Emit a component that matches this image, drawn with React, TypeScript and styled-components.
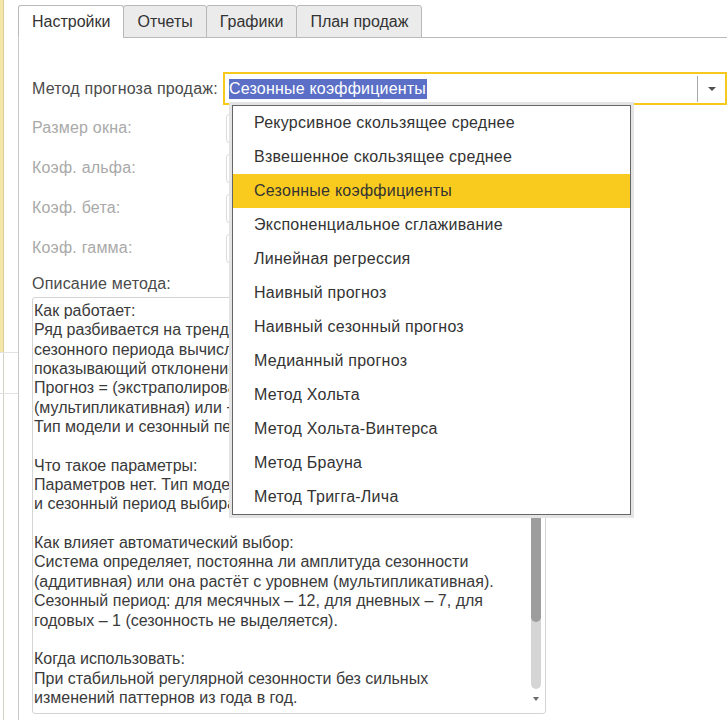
import React from "react";
import styled, { createGlobalStyle } from "styled-components";

const GlobalStyle = createGlobalStyle`
  body {
    margin: 0;
    background: #fff;
    font-family: "Liberation Sans", Arial, sans-serif;
    font-size: 16px;
    color: #333;
  }
`;

const Page = styled.div`
  display: flex;
  width: 727px;
  height: 720px;
  overflow: hidden;
`;

// strip of the neighbouring window visible on the left
const SideEdge = styled.div`
  width: 18px;
  flex: none;
  display: flex;
  flex-direction: column;
`;

const EdgeTop = styled.div`
  height: 352px;
  background: linear-gradient(to right, #f4e7a8 0 3px, #d9cf98 3px 4px, transparent 4px);
`;

const EdgeRow = styled.div<{ $h: number }>`
  height: ${(p) => p.$h}px;
  border-top: 1px solid #e2e2e2;
  background: linear-gradient(to right, transparent 0 3px, #d2d2c0 3px 4px, transparent 4px);
`;

const EdgeRest = styled.div`
  flex: 1;
  background: linear-gradient(to right, transparent 0 3px, #d2d2c0 3px 4px, transparent 4px);
`;

const Main = styled.div`
  flex: 1;
  display: flex;
  flex-direction: column;
  min-width: 0;
`;

const TabBar = styled.div`
  display: flex;
  align-items: flex-end;
  height: 38px;
  box-sizing: border-box;
  padding-top: 5px;
  border-bottom: 1px solid #b9b9b9;
`;

const Tab = styled.div<{ $active?: boolean }>`
  box-sizing: border-box;
  height: 33px;
  margin-bottom: -1px;
  padding: 0 13px;
  display: flex;
  align-items: center;
  border: 1px solid #b9b9b9;
  border-bottom-color: ${(p) => (p.$active ? "#fff" : "#b9b9b9")};
  border-radius: 3px 3px 0 0;
  background: ${(p) => (p.$active ? "#fff" : "#ebebeb")};
  color: #333;
  white-space: nowrap;

  & + & {
    margin-left: -1px;
  }
`;

const Panel = styled.div`
  flex: 1;
  border-left: 1px solid #c9c9c9;
  padding-left: 13px;
  display: flex;
  flex-direction: column;
`;

const MethodRow = styled.div`
  position: relative;
  margin-top: 34px;
  display: flex;
  align-items: center;
  height: 33px;
`;

const FieldLabel = styled.div<{ $width: number; $muted?: boolean }>`
  width: ${(p) => p.$width}px;
  flex: none;
  color: ${(p) => (p.$muted ? "#a9a9a9" : "#4a4a4a")};
  letter-spacing: 0.2px;
  white-space: nowrap;
`;

const SelectBox = styled.div`
  flex: 1;
  height: 33px;
  box-sizing: border-box;
  border: 2px solid #f8c91d;
  display: flex;
  align-items: center;
  padding-left: 4px;
`;

const SelectValue = styled.div`
  flex: 1;
  display: flex;
`;

const Highlight = styled.span`
  background: #5b6fc7;
  color: #fff;
  line-height: 20px;
  letter-spacing: 0.2px;
  padding: 0 1px 0 0;
`;

const ArrowButton = styled.div`
  width: 28px;
  height: 26px;
  box-sizing: border-box;
  border-left: 1px solid #a8a8a8;
  display: flex;
  align-items: center;
  justify-content: center;
`;

const Caret = styled.div`
  width: 0;
  height: 0;
  border-left: 4px solid transparent;
  border-right: 4px solid transparent;
  border-top: 4px solid #505050;
  margin-left: 1px;
`;

const DropList = styled.div`
  position: absolute;
  left: 200px;
  top: 33px;
  width: 399px;
  box-sizing: border-box;
  border: 1px solid #666;
  background: #fff;
  box-shadow: 0 0 0 3px #e4e4e4;
  z-index: 10;
`;

const DropItem = styled.div<{ $selected?: boolean }>`
  height: 34px;
  display: flex;
  align-items: center;
  padding-left: 21px;
  color: #333;
  letter-spacing: 0.25px;
  background: ${(p) => (p.$selected ? "#f9cb1e" : "transparent")};
  white-space: nowrap;
`;

const ParamList = styled.div`
  margin-top: 3px;
  display: flex;
  flex-direction: column;
`;

const ParamRow = styled.div`
  height: 40px;
  display: flex;
  align-items: center;
`;

const ParamBox = styled.div`
  width: 140px;
  height: 29px;
  box-sizing: border-box;
  border: 1px solid #dcdcdc;
  border-radius: 3px;
`;

const SectionLabel = styled.div`
  margin-top: 6px;
  line-height: 20px;
  color: #4a4a4a;
  letter-spacing: 0.2px;
`;

const TextBox = styled.div`
  margin-top: 3px;
  width: 514px;
  height: 417px;
  box-sizing: border-box;
  border: 1px solid #d4d4d4;
  border-radius: 3px;
  display: flex;
  overflow: hidden;
`;

const TextBody = styled.div`
  flex: 1;
  min-width: 0;
  padding: 3px 0 0 1px;
  overflow: hidden;
  color: #3a3a3a;
`;

const TextLine = styled.div`
  height: 19.35px;
  line-height: 19.35px;
  white-space: pre;
`;

const ScrollColumn = styled.div`
  width: 10px;
  flex: none;
  margin-right: 4px;
  padding: 6px 0 4px;
  display: flex;
  flex-direction: column;
  align-items: center;
`;

const ScrollTrack = styled.div`
  width: 10px;
  flex: 1;
  margin-top: 10px;
  border-radius: 5px;
  background: #d5d5d5;
`;

const ScrollThumb = styled.div`
  width: 10px;
  border-radius: 5px;
  background: #9d9d9d;
`;

const ScrollArrow = styled.div<{ $up?: boolean }>`
  height: 20px;
  display: flex;
  align-items: center;
  justify-content: center;

  &::before {
    content: "";
    border-left: 3px solid transparent;
    border-right: 3px solid transparent;
    ${(p) => (p.$up ? "border-bottom" : "border-top")}: 4px solid #6a6a6a;
  }
`;

const tabs = ["Настройки", "Отчеты", "Графики", "План продаж"];

const methods = [
  "Рекурсивное скользящее среднее",
  "Взвешенное скользящее среднее",
  "Сезонные коэффициенты",
  "Экспоненциальное сглаживание",
  "Линейная регрессия",
  "Наивный прогноз",
  "Наивный сезонный прогноз",
  "Медианный прогноз",
  "Метод Хольта",
  "Метод Хольта-Винтерса",
  "Метод Брауна",
  "Метод Тригга-Лича",
];

const params = ["Размер окна:", "Коэф. альфа:", "Коэф. бета:", "Коэф. гамма:"];

const description = [
  "Как работает:",
  "Ряд разбивается на тренд и сезонную составляющую. Для каждого",
  "сезонного периода вычисляется средний коэффициент,",
  "показывающий отклонение от тренда.",
  "Прогноз = (экстраполированный тренд) × коэффициент",
  "(мультипликативная) или + коэффициент (аддитивная).",
  "Тип модели и сезонный период определяются автоматически.",
  "",
  "Что такое параметры:",
  "Параметров нет. Тип модели (аддитивная/мультипликативная)",
  "и сезонный период выбираются по данным.",
  "",
  "Как влияет автоматический выбор:",
  "Система определяет, постоянна ли амплитуда сезонности",
  "(аддитивная) или она растёт с уровнем (мультипликативная).",
  "Сезонный период: для месячных – 12, для дневных – 7, для",
  "годовых – 1 (сезонность не выделяется).",
  "",
  "Когда использовать:",
  "При стабильной регулярной сезонности без сильных",
  "изменений паттернов из года в год.",
];

const selected = "Сезонные коэффициенты";

export default function App() {
  const thumbShare = 0.81;

  return (
    <>
      <GlobalStyle />
      <Page>
        <SideEdge>
          <EdgeTop />
          <EdgeRow $h={40} />
          <EdgeRow $h={40} />
          <EdgeRest />
        </SideEdge>

        <Main>
          <TabBar>
            {tabs.map((t, i) => (
              <Tab key={t} $active={i === 0}>
                {t}
              </Tab>
            ))}
          </TabBar>

          <Panel>
            <MethodRow>
              <FieldLabel $width={191}>Метод прогноза продаж:</FieldLabel>
              <SelectBox>
                <SelectValue>
                  <Highlight>{selected}</Highlight>
                </SelectValue>
                <ArrowButton>
                  <Caret />
                </ArrowButton>
              </SelectBox>

              <DropList>
                {methods.map((m) => (
                  <DropItem key={m} $selected={m === selected}>
                    {m}
                  </DropItem>
                ))}
              </DropList>
            </MethodRow>

            <ParamList>
              {params.map((p) => (
                <ParamRow key={p}>
                  <FieldLabel $width={194} $muted>
                    {p}
                  </FieldLabel>
                  <ParamBox />
                </ParamRow>
              ))}
            </ParamList>

            <SectionLabel>Описание метода:</SectionLabel>
            <TextBox>
              <TextBody>
                {description.map((line, i) => (
                  <TextLine key={i}>{line || " "}</TextLine>
                ))}
              </TextBody>
              <ScrollColumn>
                <ScrollArrow $up />
                <ScrollTrack>
                  <ScrollThumb style={{ height: `${thumbShare * 100}%` }} />
                </ScrollTrack>
                <ScrollArrow />
              </ScrollColumn>
            </TextBox>
          </Panel>
        </Main>
      </Page>
    </>
  );
}
